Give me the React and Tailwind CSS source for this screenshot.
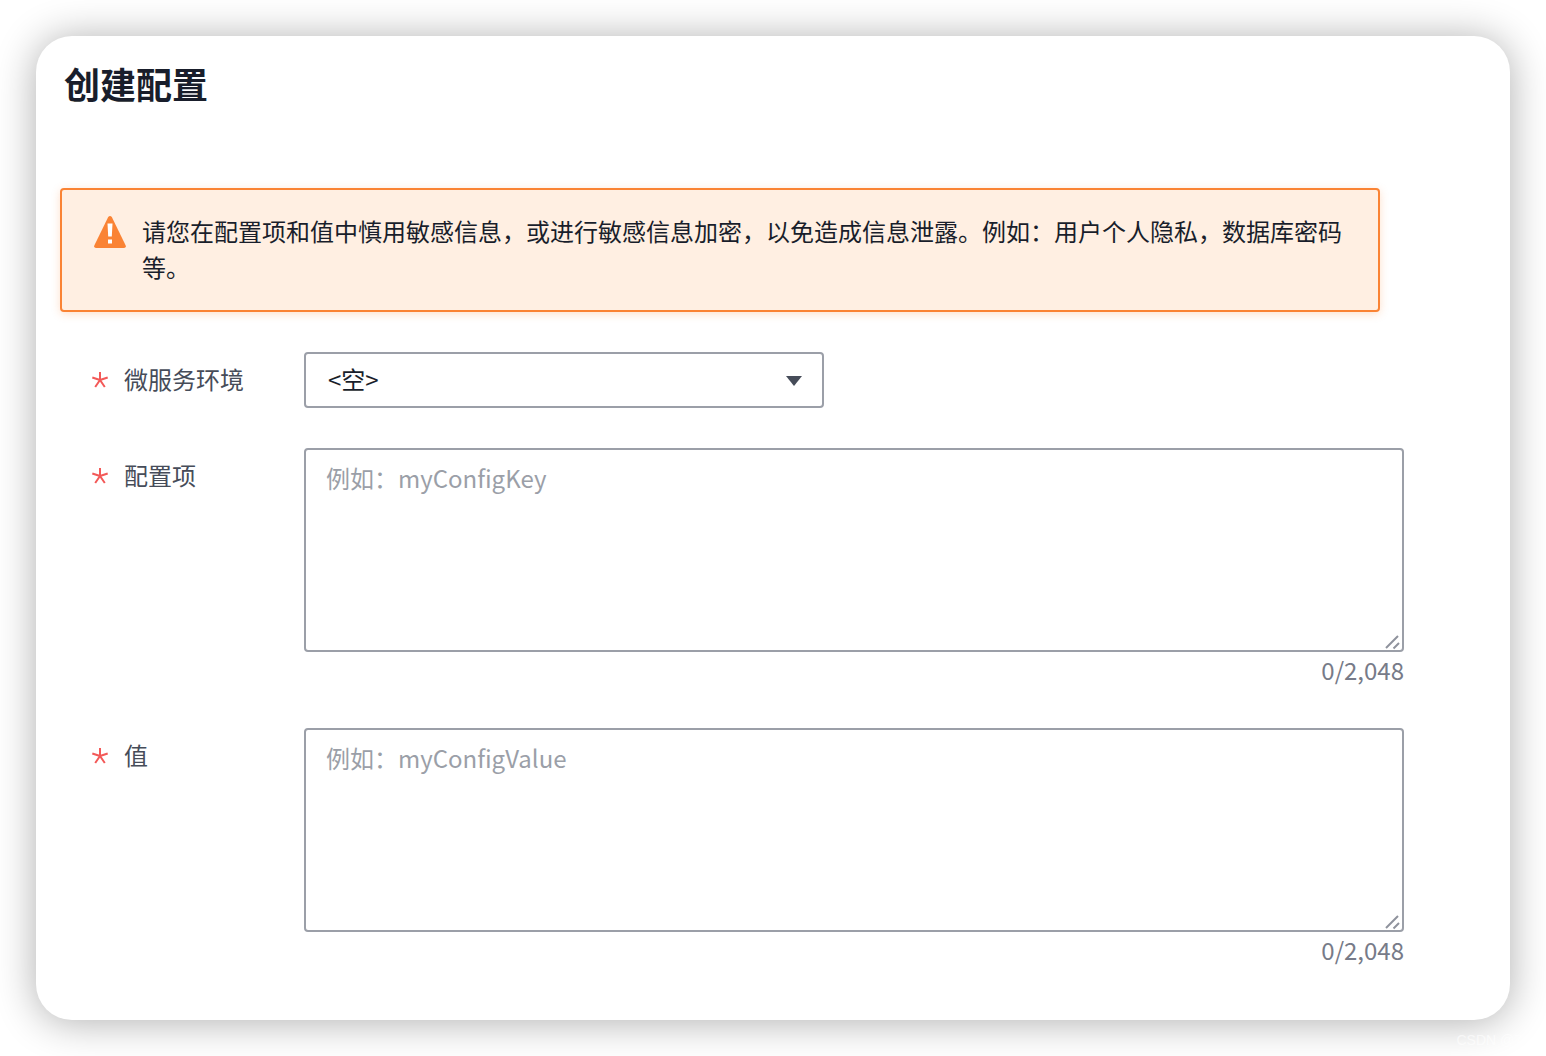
import React, { useState } from "react";

function Required() {
  return (
    <svg aria-hidden="true" viewBox="0 0 16 16" className="size-4 shrink-0" fill="none" stroke="#f35958" strokeWidth="2">
      <path d="M8 8V0M8 8L0.3 5.5M8 8L15.7 5.5M8 8L3.2 15M8 8L12.8 15" />
    </svg>
  );
}

function FieldLabel({ htmlFor, children }) {
  return (
    <label htmlFor={htmlFor} className="flex h-14 w-[244px] shrink-0 items-center gap-4 pl-8 text-[#464c59]">
      <Required />
      <span className="pb-0.5">{children}</span>
    </label>
  );
}

function TextField({ id, label, placeholder }) {
  const [value, setValue] = useState("");
  return (
    <div className="flex">
      <FieldLabel htmlFor={id}>{label}</FieldLabel>
      <div className="min-w-0 flex-1">
        <div className="relative">
          <textarea
            id={id}
            required
            maxLength={2048}
            value={value}
            onChange={(e) => setValue(e.target.value)}
            placeholder={placeholder}
            className="block h-51 w-full resize-none rounded border-2 border-[#9b9fa8] bg-white px-5 py-2.5 leading-9 text-[#191e2b] outline-none placeholder:text-[#9b9fa8]"
          />
          <svg aria-hidden="true" viewBox="0 0 16 16" className="pointer-events-none absolute right-1 bottom-0.5 size-4" fill="none" stroke="#8f939d" strokeWidth="2">
            <path d="M2 14L14 2M9.500 14.500L15 9" />
          </svg>
        </div>
        <p className="text-right leading-9 text-[#777b88]">{value.length}/2,048</p>
      </div>
    </div>
  );
}

export default function App() {
  return (
    <div className="relative bg-white p-9 font-['Noto_Sans_CJK_SC',sans-serif] text-2xl text-[#191e2b]">
      <main className="rounded-[36px] bg-white px-6 pt-6 pb-[52px] shadow-[0_2px_40px_rgba(0,0,0,0.32)]">
        <h1 className="pl-1 text-4xl leading-[46px] font-bold">创建配置</h1>

        <form className="mt-[82px] flex max-w-[1344px] flex-col gap-10">
          <div role="alert" className="mr-6 flex gap-4 rounded border-2 border-[#fa8334] bg-[#ffefe2] px-8 pt-[23px] pb-[25px] shadow-[0_2px_8px_rgba(250,131,52,0.25)]">
            <svg aria-hidden="true" viewBox="0 0 32 32" className="mt-[3px] size-8 shrink-0">
              <path d="M14.200 1.100Q16-1 17.800 1.100L31.700 29.500Q32.300 31.800 30 32H2Q-0.300 31.800 0.300 29.500Z" fill="#fa8334" />
              <path d="M13.500 7.500H18.500L17.800 20.500H14.200ZM14 23.500H18V27.500H14Z" fill="#fff" />
            </svg>
            <p className="leading-9">请您在配置项和值中慎用敏感信息，或进行敏感信息加密，以免造成信息泄露。例如：用户个人隐私，数据库密码等。</p>
          </div>

          <div className="flex">
            <FieldLabel htmlFor="env">微服务环境</FieldLabel>
            <div className="relative w-full max-w-[520px]">
              <select id="env" required className="h-14 w-full appearance-none rounded border-2 border-[#9b9fa8] bg-white px-[22px] pb-0.5 text-[#191e2b] outline-none">
                <option>&lt;空&gt;</option>
              </select>
              <svg aria-hidden="true" viewBox="0 0 16 10" className="pointer-events-none absolute top-6 right-5.5 h-2.5 w-4">
                <path d="M0 0H16L8 10Z" fill="#464c59" />
              </svg>
            </div>
          </div>

          <TextField id="config-key" label="配置项" placeholder="例如：myConfigKey" />
          <TextField id="config-value" label="值" placeholder="例如：myConfigValue" />
        </form>
      </main>
      <span className="absolute right-6 bottom-1.5 font-['Liberation_Sans',sans-serif] text-sm text-white/60">CSDN @7</span>
    </div>
  );
}
